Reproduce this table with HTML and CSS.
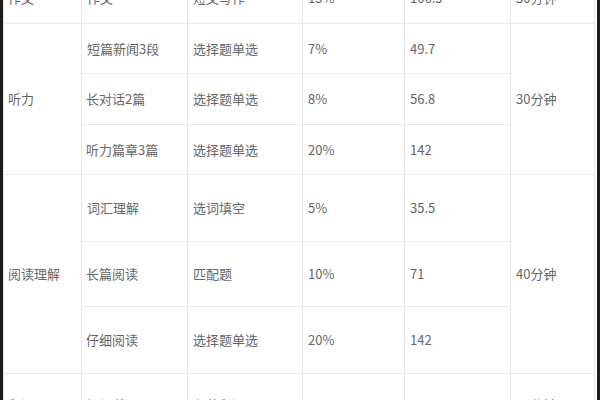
FILE: index.html
```html
<!DOCTYPE html>
<html lang="zh-CN">
<head>
<meta charset="utf-8">
<link rel="stylesheet" href="styles.css">
</head>
<body>
<div class="frame">
  <table class="exam">
    <colgroup>
      <col class="c1"><col class="c2"><col class="c3"><col class="c4"><col class="c5"><col class="c6">
    </colgroup>
    <tbody>
      <tr class="r-top">
        <td>作文</td><td>作文</td><td>短文写作</td><td>15%</td><td>106.5</td><td>30分钟</td>
      </tr>
      <tr class="r-listen">
        <td rowspan="3">听力</td><td>短篇新闻3段</td><td>选择题单选</td><td>7%</td><td>49.7</td><td rowspan="3">30分钟</td>
      </tr>
      <tr class="r-listen2">
        <td>长对话2篇</td><td>选择题单选</td><td>8%</td><td>56.8</td>
      </tr>
      <tr class="r-listen">
        <td>听力篇章3篇</td><td>选择题单选</td><td>20%</td><td>142</td>
      </tr>
      <tr class="r-read">
        <td rowspan="3">阅读理解</td><td>词汇理解</td><td>选词填空</td><td>5%</td><td>35.5</td><td rowspan="3">40分钟</td>
      </tr>
      <tr class="r-read2">
        <td>长篇阅读</td><td>匹配题</td><td>10%</td><td>71</td>
      </tr>
      <tr class="r-read">
        <td>仔细阅读</td><td>选择题单选</td><td>20%</td><td>142</td>
      </tr>
      <tr class="r-bottom">
        <td>翻译</td><td>汉译英</td><td>段落翻译</td><td>15%</td><td>106.5</td><td>30分钟</td>
      </tr>
    </tbody>
  </table>
</div>
</body>
</html>
```
FILE: styles.css
```css
html, body {
  margin: 0;
  padding: 0;
  background: #ffffff;
  height: 400px;
  overflow: hidden;
}
.frame {
  height: 400px;
  overflow: hidden;
  border-left: 3px solid #1c1c1c;
  border-right: 3px solid #1c1c1c;
  padding-right: 3px;
  background: #fff;
}
.exam {
  border-collapse: collapse;
  table-layout: fixed;
  width: 591px;
  margin-top: -28px;
  font-family: "Noto Sans CJK SC", "Microsoft YaHei", sans-serif;
  font-size: 13px;
  color: #666;
}
.c1 { width: 78px; }
.c2 { width: 106px; }
.c3 { width: 115px; }
.c4 { width: 102px; }
.c5 { width: 106px; }
.c6 { width: 84px; }
.exam td {
  border: 1px solid #e8e8e8;
  padding: 0 0 0 5px;
  vertical-align: middle;
  line-height: 18px;
  white-space: nowrap;
}
.exam tr td:first-child { padding-left: 4px; }
.r-top { height: 51px; }
.r-listen { height: 50px; }
.r-listen2 { height: 51px; }
.r-read { height: 67px; }
.r-read2 { height: 65px; }
.r-bottom { height: 62px; }
```
